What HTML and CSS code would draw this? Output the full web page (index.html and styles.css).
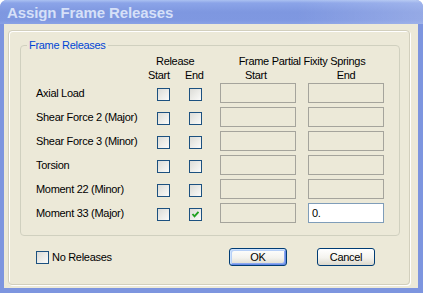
FILE: index.html
```html
<!DOCTYPE html>
<html lang="en" dir="ltr">
<head>
    <meta charset="UTF-8">
    <meta name="viewport" content="width=device-width, initial-scale=1.0">
    <title>Assign Frame Releases</title>
    <link rel="stylesheet" href="styles.css">
</head>
<body>
    <div class="window">
        <div class="titlebar">Assign Frame Releases</div>
        <div class="client">
            <div class="frame">
                <fieldset class="group">
                    <legend>Frame Releases</legend>

                    <div class="grid head">
                        <span class="h-release">Release</span>
                        <span class="h-springs">Frame Partial Fixity Springs</span>
                        <span class="h-rel-start">Start</span>
                        <span class="h-rel-end">End</span>
                        <span class="h-spr-start">Start</span>
                        <span class="h-spr-end">End</span>
                    </div>

                    <div class="grid rows">
                        <span class="lbl">Axial Load</span>
                        <span class="cb"></span><span class="cb"></span>
                        <span class="field"></span><span class="field"></span>

                        <span class="lbl">Shear Force 2 (Major)</span>
                        <span class="cb"></span><span class="cb"></span>
                        <span class="field"></span><span class="field"></span>

                        <span class="lbl">Shear Force 3 (Minor)</span>
                        <span class="cb"></span><span class="cb"></span>
                        <span class="field"></span><span class="field"></span>

                        <span class="lbl">Torsion</span>
                        <span class="cb"></span><span class="cb"></span>
                        <span class="field"></span><span class="field"></span>

                        <span class="lbl">Moment 22 (Minor)</span>
                        <span class="cb"></span><span class="cb"></span>
                        <span class="field"></span><span class="field"></span>

                        <span class="lbl">Moment 33 (Major)</span>
                        <span class="cb"></span>
                        <span class="cb checked">
                            <svg width="11" height="11" viewBox="0 0 11 11"><polyline points="2.5,5 4.5,7.3 8.5,2.8" fill="none" stroke="#21a121" stroke-width="1.9"/></svg>
                        </span>
                        <span class="field"></span><span class="field active">0.</span>
                    </div>
                </fieldset>

                <div class="bottom">
                    <label class="no-rel"><span class="cb"></span>No Releases</label>
                    <button class="btn default">OK</button>
                    <button class="btn">Cancel</button>
                </div>
            </div>
        </div>
    </div>
</body>
</html>
```

FILE: styles.css
```css
body {
    margin: 0;
    font-family: "Liberation Sans", Arial, sans-serif;
    font-size: 11px;
    letter-spacing: -0.3px;
    color: #000;
}
.window {
    width: 423px;
    height: 293px;
    display: flex;
    flex-direction: column;
    background: #7d95df;
    border-radius: 7px 7px 0 0;
    overflow: hidden;
}
.titlebar {
    height: 22px;
    padding: 2px 0 0 7px;
    line-height: 22px;
    font-size: 15px;
    font-weight: bold;
    letter-spacing: -0.1px;
    color: #d6e0f8;
    background:
        linear-gradient(to right, rgba(255,255,255,0) 70%, rgba(255,255,255,0.18)),
        linear-gradient(to bottom, #abc1f1 0, #8ba4e8 3px, #7e97e0 12px, #7f98e1 20px, #8aa2e5 24px);
}
.client {
    flex: 1;
    margin: 0 5px 5px 4px;
    background: #ece9d8;
    display: flex;
    flex-direction: column;
}
.frame {
    flex: 1;
    margin: 6px 8px 3px 4px;
    border: 1px solid #d2cfbd;
    border-radius: 4px;
    box-shadow: inset 1px 1px 0 #fff, 1px 1px 0 #fff;
}
.group {
    margin: 8px 9px 0 11px;
    padding: 4px 14px 12px 15px;
    border: 1px solid #d0d0bf;
    border-radius: 4px;
    min-width: 0;
}
.group legend {
    color: #0046d5;
    padding: 0 2px;
    margin-left: -9px;
}
.grid {
    display: grid;
    grid-template-columns: 121px 32px 31px 88px 76px;
}
.head {
    grid-template-rows: 14px 14px;
}
.h-release { grid-column: 2 / 4; justify-self: start; margin-left: -1px; }
.h-springs { grid-column: 4 / 6; justify-self: center; }
.h-rel-start { grid-column: 2; justify-self: start; margin-left: -9px; }
.h-rel-end { grid-column: 3; justify-self: start; margin-left: -4px; }
.h-spr-start { grid-column: 4; justify-self: start; margin-left: 25px; }
.h-spr-end { grid-column: 5; justify-self: center; }
.rows {
    grid-auto-rows: 20px;
    row-gap: 4px;
    align-items: center;
}
.cb {
    display: inline-block;
    width: 13px;
    height: 13px;
    box-sizing: border-box;
    border: 1px solid #1c5180;
    background: linear-gradient(135deg, #dcdcd7, #fbfbf9);
}
.rows .cb {
    margin-top: 2px;
}
.cb svg {
    display: block;
}
.field {
    width: 76px;
    height: 20px;
    box-sizing: border-box;
    border: 1px solid #a5a49c;
    background: #ece9d8;
}
.field.active {
    border-color: #7f9db9;
    background: #fff;
    padding-left: 3px;
    line-height: 18px;
}
.bottom {
    display: flex;
    align-items: center;
    margin-top: 12px;
    padding-left: 27px;
    height: 18px;
}
.no-rel {
    width: 193px;
    display: flex;
    align-items: center;
    gap: 3px;
}
.btn {
    width: 58px;
    height: 18px;
    box-sizing: border-box;
    padding: 0;
    font: inherit;
    letter-spacing: inherit;
    color: #000;
    border: 1px solid #003c74;
    border-radius: 3px;
    background: linear-gradient(#ffffff, #f4f3ee 55%, #dcd8cc);
}
.btn + .btn {
    margin-left: 30px;
}
.btn.default {
    box-shadow: inset 1px 1px 0 #cee3fe, inset -1px -1px 0 #6a8ae6, inset 2px 2px 0 #b7d0f7, inset -2px -2px 0 #8aa8ef;
}
```
